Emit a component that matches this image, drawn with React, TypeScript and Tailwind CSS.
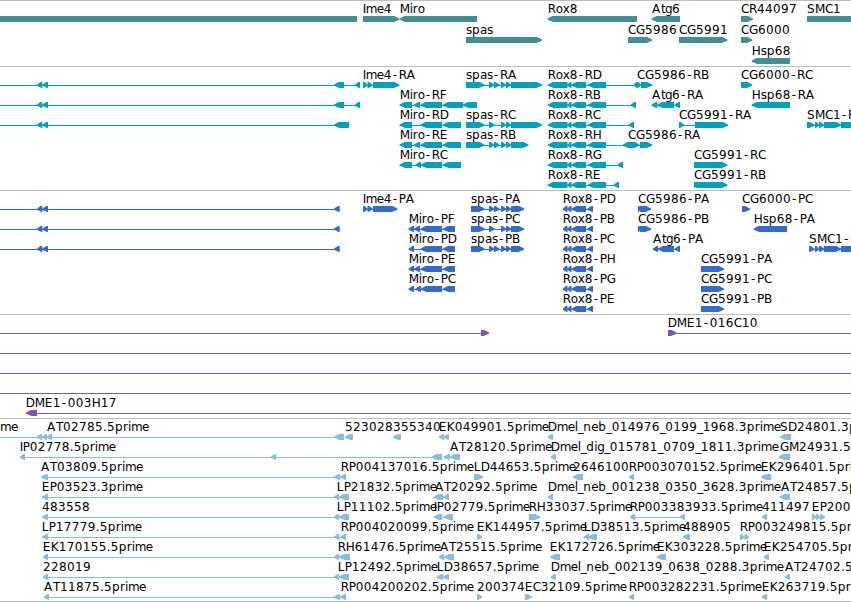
type Dir = 'fwd' | 'rev' | 'flat';

interface Feature {
  label: string;
  dir: Dir;
  // flat list of start/end pairs
  exons: number[];
  labelX?: number;
  line?: [number, number];
}

interface TrackData {
  name: string;
  color: string;
  rowHeight: number;
  padding: string;
  rows: Feature[][];
}

const fwd = (label: string, exons: number[], labelX?: number): Feature => ({ label, dir: 'fwd', exons, labelX });
const rev = (label: string, exons: number[], labelX?: number): Feature => ({ label, dir: 'rev', exons, labelX });
const span = (start: number, end: number): Feature => ({ label: '', dir: 'flat', exons: [], line: [start, end] });

const LEFT_PAIR = [37, 42.3, 42.3, 48];
const leftGene = (...tail: number[]): Feature => ({
  label: '',
  dir: 'rev',
  exons: [...LEFT_PAIR, ...tail],
  line: [0, tail[tail.length - 1]],
});

const ROX8 = [548, 567.5, 567.5, 571.5, 571.5, 586, 588, 606];
const ROX8_CDS = [563, 567.5, 567.5, 571.5, 571.5, 586, 587.5, 593];
const SPAS_MID = [489, 494, 494, 499.5, 501, 506, 506, 511];
const SPAS_SHORT = [489, 494.5, 501, 506, 506, 511];
const SMC1_TAIL = [815, 819, 819, 824, 824, 841, 841, 856];

const genes: Feature[][] = [
  [
    { label: '', dir: 'flat', exons: [0, 357] },
    fwd('Ime4', [363, 399.3]),
    rev('Miro', [399.7, 477]),
    rev('Rox8', [547.7, 637]),
    rev('Atg6', [651.7, 680]),
    fwd('CR44097', [741, 753]),
    fwd('SMC1', [807, 870]),
  ],
  [
    fwd('spas', [466, 542]),
    fwd('CG5986', [628, 652]),
    fwd('CG5991', [679, 727.3]),
    fwd('CG6000', [741, 752.3]),
  ],
  [rev('Hsp68', [751.7, 790])],
];

const transcripts: Feature[][] = [
  [
    leftGene(334, 344, 355, 360),
    fwd('Ime4-RA', [363, 367.5, 367.5, 372.5, 373, 399.3]),
    fwd('spas-RA', [466, 484.5, ...SPAS_MID, 511, 542]),
    rev('Rox8-RD', [...ROX8, 633.7, 638]),
    fwd('CG5986-RB', [637, 641, 641, 652]),
    fwd('CG6000-RC', [741, 752.3]),
  ],
  [
    leftGene(334, 344, 355, 360),
    rev('Miro-RF', [399.7, 412, 414, 420, 420.7, 442, 443, 463, 463, 477]),
    rev('Rox8-RB', [...ROX8, 630.7, 636]),
    rev('Atg6-RA', [651.7, 657.3, 657.3, 674, 674.7, 680]),
    rev('Hsp68-RA', [751.7, 790]),
  ],
  [
    leftGene(334, 349),
    rev('Miro-RD', [399.7, 412, 420.7, 442, 443, 461]),
    fwd('spas-RC', [466, 484.5, ...SPAS_SHORT, 511, 542]),
    rev('Rox8-RC', [...ROX8, 628.7, 634]),
    fwd('CG5991-RA', [679, 684, 695, 728]),
    fwd('SMC1-RA', [807, 814.5, ...SMC1_TAIL]),
  ],
  [
    rev('Miro-RE', [399.7, 412, 414, 420, 420.7, 442, 443, 461]),
    fwd('spas-RB', [466, 484.5, ...SPAS_MID, 511, 528.3]),
    rev('Rox8-RH', [...ROX8, 623, 629]),
    fwd('CG5986-RA', [628, 639.5, 640, 652]),
  ],
  [
    rev('Miro-RC', [399.7, 412, 415.5, 421, 421, 442, 443, 461]),
    rev('Rox8-RG', [...ROX8, 617.7, 623]),
    fwd('CG5991-RC', [694, 727.3]),
  ],
  [
    rev('Rox8-RE', [...ROX8, 613.7, 619]),
    fwd('CG5991-RB', [694, 697, 696, 727.3]),
  ],
];

const proteins: Feature[][] = [
  [
    leftGene(334, 339.7),
    fwd('Ime4-PA', [363, 367.5, 367.5, 372.5, 373, 397.3]),
    fwd('spas-PA', [471, 484.7, ...SPAS_MID, 511, 524]),
    rev('Rox8-PD', ROX8_CDS),
    fwd('CG5986-PA', [638, 640.5, 640, 651]),
    fwd('CG6000-PC', [742, 750]),
  ],
  [
    leftGene(334, 339.7),
    rev('Miro-PF', [408.7, 414, 414, 420, 420.7, 442, 443, 455]),
    fwd('spas-PC', [471, 484.7, ...SPAS_SHORT, 511, 524]),
    rev('Rox8-PB', ROX8_CDS),
    fwd('CG5986-PB', [638, 640.5, 640, 651]),
    rev('Hsp68-PA', [753.7, 787]),
  ],
  [
    leftGene(334, 339.7),
    rev('Miro-PD', [408.7, 414, 420.7, 442, 443, 455]),
    fwd('spas-PB', [471, 484.7, ...SPAS_MID, 511, 524]),
    rev('Rox8-PC', ROX8_CDS),
    rev('Atg6-PA', [653, 658, 658, 674, 674.7, 680]),
    fwd('SMC1-PA', [809, 814.5, ...SMC1_TAIL]),
  ],
  [
    rev('Miro-PE', [408.7, 414, 414, 420, 420.7, 442, 443, 455]),
    rev('Rox8-PH', ROX8_CDS),
    fwd('CG5991-PA', [701, 724]),
  ],
  [
    rev('Miro-PC', [408.7, 414, 415.5, 421, 421, 442, 443, 455]),
    rev('Rox8-PG', ROX8_CDS),
    fwd('CG5991-PC', [701, 724]),
  ],
  [
    rev('Rox8-PE', ROX8_CDS),
    fwd('CG5991-PB', [701, 724]),
  ],
];

const bacs: Feature[][] = [
  [
    { label: '', dir: 'fwd', exons: [481, 489], line: [0, 489] },
    { label: 'DME1-016C10', dir: 'fwd', exons: [668, 676.5], line: [668, 851] },
  ],
  [span(0, 851)],
  [span(0, 851)],
  [span(0, 851)],
  [{ label: 'DME1-003H17', dir: 'rev', exons: [26, 37], line: [26, 851] }],
];

const ests: Feature[][] = [
  [
    rev('me', [], 0),
    { label: '', dir: 'rev', exons: [37, 42, 42, 47, 47, 52, 334, 344], line: [0, 344] },
    rev('AT02785.5prime', [], 47),
    rev('523028', [345, 353]),
    rev('355340', [393, 401]),
    rev('EK049901.5prime', [439, 444, 444, 449]),
    rev('Dmel_neb_014976_0199_1968.3prime', [547.7, 553]),
    rev('SD24801.3prime', [780, 791]),
  ],
  [
    rev('IP02778.5prime', [20, 25, 271, 276, 431.7, 442]),
    rev('AT28120.5prime', [443.5, 450, 450, 460], 450),
    rev('Dmel_dig_015781_0709_1811.3prime', [550.7, 556]),
    rev('GM24931.5prime', [778.7, 790], 780),
  ],
  [
    rev('AT03809.5prime', [41, 48, 334, 340, 340, 346]),
    rev('RP004137016.5prime', [], 341),
    fwd('LD44653.5prime', [474, 483.3]),
    rev('2646100', [572.7, 583]),
    rev('RP003070152.5prime', [629, 634]),
    rev('EK296401.5prime', [761, 771]),
  ],
  [
    rev('EP03523.3prime', [42, 48, 334, 339, 339, 349]),
    rev('LP21832.5prime', [], 337),
    rev('AT20292.5prime', [433.7, 443, 443, 449], 435),
    rev('Dmel_neb_001238_0350_3628.3prime', [547.7, 553]),
    rev('AT24857.5prime', [779.7, 790], 781),
  ],
  [
    rev('483558', [42, 48, 334, 339, 339, 349]),
    rev('LP11102.5prime', [], 337),
    rev('IP02779.5prime', [433.7, 442, 443.7, 453]),
    fwd('RH33037.5prime', [529, 540.3]),
    rev('RP003383933.5prime', [630, 635, 680, 685]),
    rev('411497', [761.7, 767]),
    fwd('EP200', [812, 816, 816, 820, 820, 825]),
  ],
  [
    rev('LP17779.5prime', [42, 48, 334, 339.5, 340.5, 346]),
    rev('RP004020099.5prime', [], 341),
    fwd('EK144957.5prime', [477, 482.3]),
    rev('LD38513.5prime', [583.7, 589, 588, 597]),
    rev('488905', [682.7, 690]),
    fwd('RP003249815.5prime', [740, 744.5, 744.5, 749]),
  ],
  [
    rev('EK170155.5prime', [43, 48, 334, 339, 339, 350]),
    rev('RH61476.5prime', [], 338),
    rev('AT25515.5prime', [439, 444, 444, 454], 440),
    rev('EK172726.5prime', [550, 560]),
    rev('EK303228.5prime', [656.7, 666]),
    rev('EK254705.5prime', [763.7, 769]),
  ],
  [
    rev('228019', [43, 48, 334, 339, 339, 349]),
    rev('LP12492.5prime', [], 338),
    rev('LD38657.5prime', [436.7, 443, 443, 449]),
    rev('Dmel_neb_002139_0638_0288.3prime', [550.7, 556]),
    rev('AT24702.5prime', [784.7, 790]),
  ],
  [
    rev('AT11875.5prime', [44, 49, 334, 340, 340, 346]),
    rev('RP004200202.5prime', [], 341),
    fwd('200374', [477, 482]),
    fwd('EC32109.5prime', [525, 532]),
    rev('RP003282231.5prime', [629, 634]),
    rev('EK263719.5prime', [761.7, 767]),
  ],
];

const tracks: TrackData[] = [
  { name: 'Genes', color: '#3f8f93', rowHeight: 21, padding: 'pb-[2px]', rows: genes },
  { name: 'Transcripts', color: '#009fc0', rowHeight: 20, padding: 'pb-[3px]', rows: transcripts },
  { name: 'Proteins', color: '#316ccc', rowHeight: 20, padding: 'pb-[3px]', rows: proteins },
  { name: 'BACs', color: '#7759a8', rowHeight: 20, padding: 'pb-[3px]', rows: bacs },
  { name: 'ESTs', color: '#88bddd', rowHeight: 20, padding: 'pb-[2px]', rows: ests },
];

// glyph advances at 12px, digits and anything missing are 8
const ADVANCE: Record<string, number> = {
  A: 9, D: 9, F: 7, G: 9, H: 9, I: 3, L: 7, M: 10, P: 7, T: 7,
  a: 7, e: 7, g: 7, i: 3, l: 3, m: 11, o: 7, r: 5, s: 6, t: 4, x: 7,
  '-': 7, '.': 4, _: 5.5,
};

function glyphPositions(text: string, x: number) {
  let pen = x;
  return text.split('').map(ch => {
    const pos = ch === '-' ? pen + 1 : pen;
    pen += ADVANCE[ch] ?? 8;
    return pos;
  });
}

function exonPoints(start: number, end: number, dir: Dir) {
  const width = end - start;
  const head = width < 7 ? width - 0.8 : 5.5;
  if (dir === 'rev') {
    return `${start},2.4 ${start + head - 0.7},0 ${end},0 ${end},6 ${start + head},6 ${start},3.8`;
  }
  if (dir === 'fwd') {
    return `${start},0 ${end - head + 0.7},0 ${end},2.4 ${end},3.8 ${end - head},6 ${start},6`;
  }
  return `${start},0 ${end},0 ${end},6 ${start},6`;
}

function FeatureGlyph({ feature }: { feature: Feature }) {
  const { exons, dir } = feature;
  const line = feature.line ?? (exons.length > 2 ? [exons[0], exons[exons.length - 1]] : null);
  const pairs: [number, number][] = [];
  for (let i = 0; i < exons.length; i += 2) pairs.push([exons[i], exons[i + 1]]);

  return (
    <g transform="translate(0 15)">
      {line && <rect x={line[0]} y={3} width={line[1] - line[0]} height={1} />}
      {pairs.map(([start, end], i) => (
        <polygon key={i} points={exonPoints(start, end, dir)} />
      ))}
    </g>
  );
}

function Label({ feature }: { feature: Feature }) {
  const start = feature.labelX ?? Math.floor(feature.exons[0] + 0.4);
  // pull stems in a little so they line up with the edge of the feature
  const x = /^[DEHILMRP]/.test(feature.label) ? start - 0.2 : start;
  return (
    <text x={glyphPositions(feature.label, x).join(' ')} y={12} className="fill-black text-[12px]">
      {feature.label}
    </text>
  );
}

function Track({ track }: { track: TrackData }) {
  return (
    <section aria-label={track.name} className={`border-t border-[#bebebe] ${track.padding}`}>
      {track.rows.map((row, i) => (
        <svg key={i} width={851} height={track.rowHeight} fill={track.color} className="block overflow-visible">
          {row.map((feature, j) => (
            <FeatureGlyph key={j} feature={feature} />
          ))}
          {row.filter(f => f.label).map(feature => (
            <Label key={feature.label} feature={feature} />
          ))}
        </svg>
      ))}
    </section>
  );
}

export default function App() {
  return (
    <main className="flex h-[602px] w-[851px] flex-col overflow-hidden border-b border-[#bebebe] bg-white font-['DejaVu_Sans',sans-serif]">
      {tracks.map(track => (
        <Track key={track.name} track={track} />
      ))}
    </main>
  );
}
